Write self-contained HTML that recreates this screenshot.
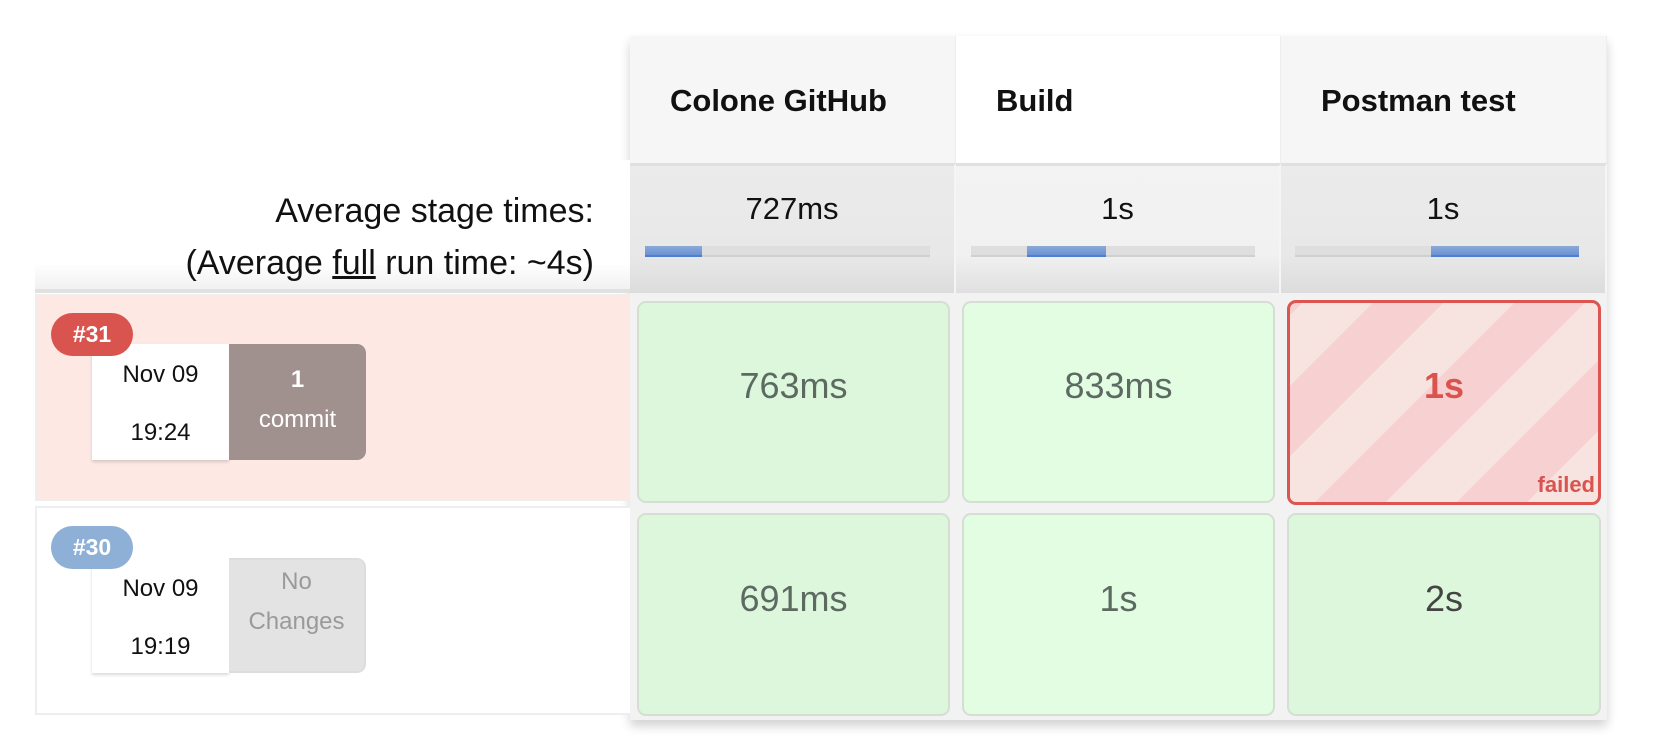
<!DOCTYPE html>
<html><head><style>
*{margin:0;padding:0;box-sizing:border-box}
body{width:1670px;height:756px;background:#fff;font-family:"Liberation Sans",sans-serif;color:#111;position:relative;overflow:hidden}
.a{position:absolute}
.hd{font-weight:bold;font-size:31px;top:36px;height:127px;line-height:130px;padding-left:40px;border-right:1px solid #eee}
.avg{top:163px;height:130px;background:linear-gradient(#ebebeb 0,#e8e8e8 70%,#dcdcdc 100%);border-right:2px solid #f5f5f5;border-top:3px solid #e0e0e0}
.avg .t{position:absolute;top:25px;width:100%;text-align:center;font-size:31px}
.bar{position:absolute;top:80px;height:11px;background:#dedede;box-shadow:inset 0 -2px 0 #d0d0d0}
.bar i{position:absolute;top:0;height:11px;background:linear-gradient(#8aa9d6,#6a93d4);border-bottom:2px solid #4f7fd0}
.cell{border:2px solid #d4dfd2;border-radius:9px;background:#dcf7dc;text-align:center;color:#5d6a62;font-size:36px}
.date{background:#fff;box-shadow:0 2px 3px rgba(0,0,0,.15);font-size:24px;text-align:center;line-height:58px;padding-top:2px}
.badge{color:#fff;font-weight:bold;font-size:23px;text-align:center;line-height:43px;border-radius:22px;width:82px;height:43px}
</style></head><body>
<div class="a" style="left:630px;top:36px;width:977px;height:684px;box-shadow:0 6px 10px rgba(0,0,0,.18);background:#f2f2f2"></div>
<div class="a hd" style="left:630px;width:326px;background:#f6f6f6">Colone GitHub</div>
<div class="a hd" style="left:956px;width:325px;background:#fff">Build</div>
<div class="a hd" style="left:1281px;width:326px;background:#f6f6f6">Postman test</div>

<div class="a" style="left:35px;top:160px;width:595px;height:133px;background:linear-gradient(#fff 80%,#f1f1f1);border-bottom:4px solid #e1e1e1"></div>
<div class="a" style="left:0;top:185px;width:594px;text-align:right;font-size:34px;line-height:52px">Average stage times:<br>(Average <u>full</u> run time: ~4s)</div>

<div class="a avg" style="left:630px;width:326px"><div class="t">727ms</div><div class="bar" style="left:15px;width:285px"><i style="left:0;width:57px"></i></div></div>
<div class="a avg" style="left:956px;width:325px;background:linear-gradient(#f3f3f3 0,#f1f1f1 70%,#e0e0e0 100%)"><div class="t">1s</div><div class="bar" style="left:15px;width:284px"><i style="left:56px;width:79px"></i></div></div>
<div class="a avg" style="left:1281px;width:326px"><div class="t">1s</div><div class="bar" style="left:14px;width:284px"><i style="left:136px;width:148px"></i></div></div>

<div class="a" style="left:35px;top:294px;width:595px;height:207px;background:#fde8e4;border:2px solid #eee;border-right:none"></div>
<div class="a" style="left:35px;top:506px;width:595px;height:209px;background:#fff;border:2px solid #eee;border-right:none"></div>

<div class="a date" style="left:92px;top:344px;width:137px;height:116px">Nov 09<br>19:24</div>
<div class="a" style="left:229px;top:344px;width:137px;height:116px;background:#a0918e;border-radius:0 9px 9px 0;color:#fff;text-align:center;font-size:24px;line-height:40px;padding-top:16px"><b>1</b><br>commit</div>
<div class="a badge" style="left:51px;top:313px;background:#d9534f">#31</div>

<div class="a date" style="left:92px;top:558px;width:137px;height:115px">Nov 09<br>19:19</div>
<div class="a" style="left:229px;top:558px;width:137px;height:115px;background:#e3e3e3;border:2px solid #ddd;border-left:none;border-radius:0 9px 9px 0;color:#9a9a9a;text-align:center;font-size:24px;line-height:40px;padding-top:2px">No<br>Changes</div>
<div class="a badge" style="left:51px;top:526px;background:#8eb0d6">#30</div>

<div class="a cell" style="left:637px;top:301px;width:313px;height:202px;line-height:166px">763ms</div>
<div class="a cell" style="left:962px;top:301px;width:313px;height:202px;line-height:166px;background:#e3fde3">833ms</div>
<div class="a cell" style="left:1287px;top:300px;width:314px;height:205px;line-height:166px;border:3px solid #dc5550;background:repeating-linear-gradient(-45deg,#f7e3df 0 50px,#f7d1d1 50px 100px);color:#d9534f;font-weight:bold">1s<span style="position:absolute;right:3px;bottom:6px;font-size:22px;line-height:22px">failed</span></div>
<div class="a cell" style="left:637px;top:513px;width:313px;height:203px;line-height:168px">691ms</div>
<div class="a cell" style="left:962px;top:513px;width:313px;height:203px;line-height:168px;background:#e3fde3">1s</div>
<div class="a cell" style="left:1287px;top:513px;width:314px;height:203px;line-height:168px;color:#444">2s</div>
</body></html>
